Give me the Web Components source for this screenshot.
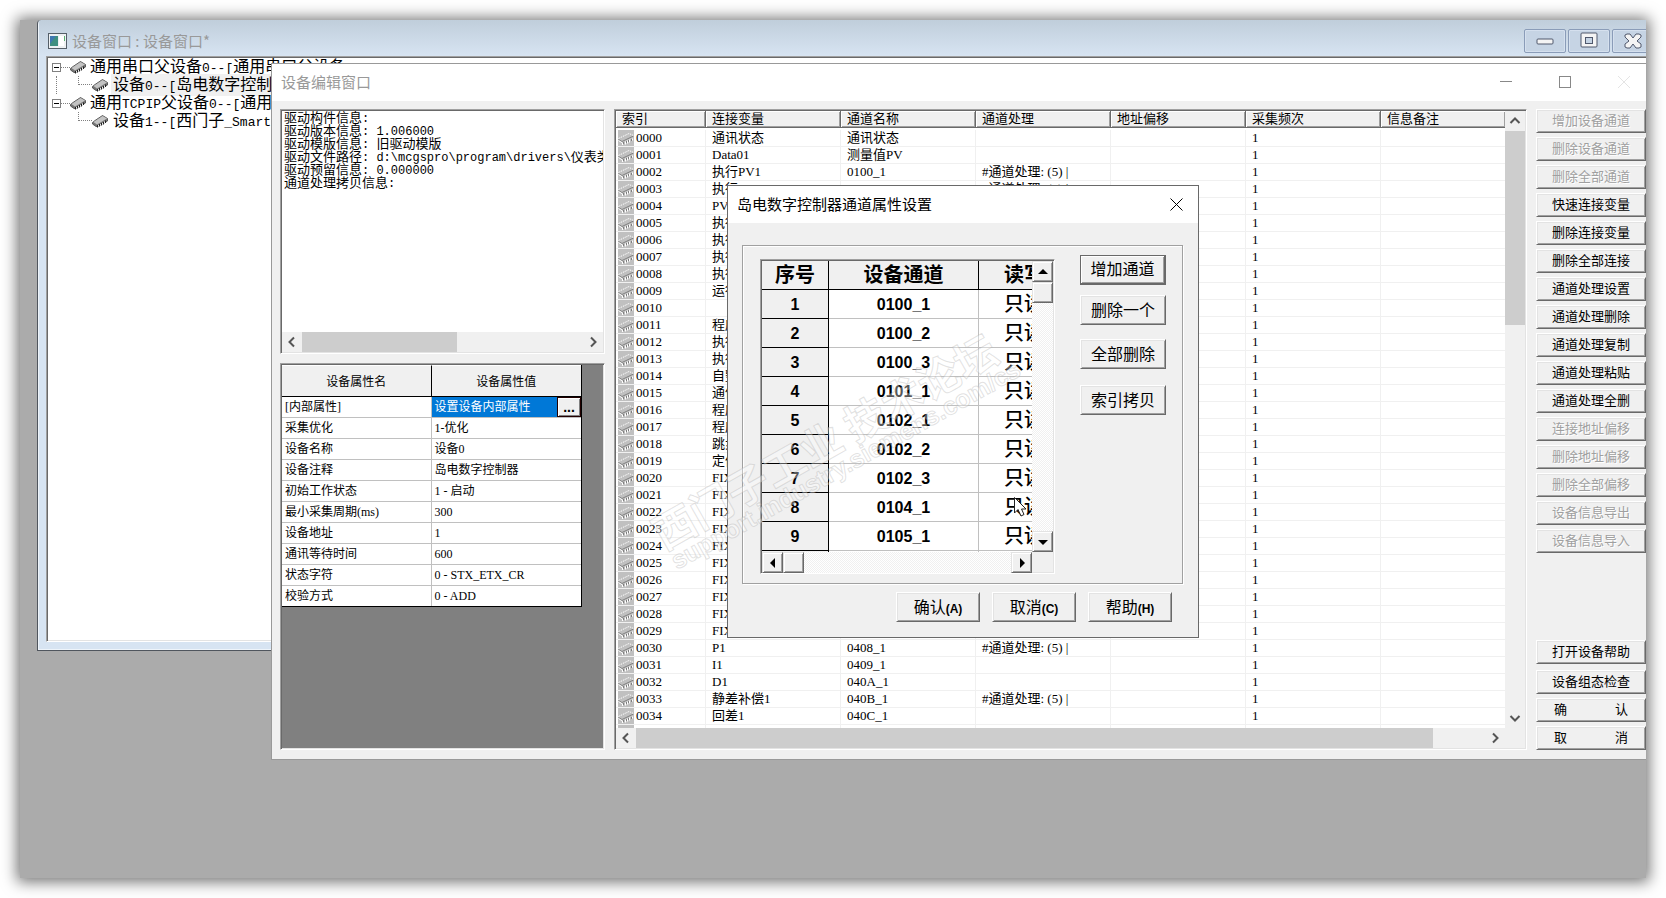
<!DOCTYPE html>
<html lang="zh-CN">
<head>
<meta charset="utf-8">
<title>设备窗口</title>
<style>
  html, body { margin: 0; height: 100%; background: #fff; }
  body { display: flex; font-family: "Liberation Serif", "Noto Sans CJK SC", serif; font-size: 13px; color: #000; overflow: hidden; }
</style>
</head>
<body>
<mdi-desktop>
  <device-window></device-window>
  <editor-window></editor-window>
  <channel-dialog></channel-dialog>
  <site-watermark></site-watermark>
</mdi-desktop>

<script>
const SANS = '"Noto Sans CJK SC", sans-serif';

const RESET = `
  :host, *, *::before, *::after { box-sizing: border-box; }
  button { font: inherit; color: inherit; margin: 0; padding: 0; border: 0; background: none; }
  table { border-collapse: separate; border-spacing: 0; table-layout: fixed; width: 100%; }
  th, td { font-weight: normal; text-align: left; padding: 0; white-space: nowrap; }
  .sunken { border: 1px solid; border-color: #a0a0a0 #fff #fff #a0a0a0; padding: 1px; background: #fff;
            box-shadow: inset 1px 1px #696969, inset -1px -1px #e3e3e3; }
`;

function define(name, css, html, after) {
  const tpl = document.createElement('template');
  tpl.innerHTML = `<style>${RESET}${css}</style>${html}`;
  customElements.define(name, class extends HTMLElement {
    constructor() {
      super();
      this.attachShadow({ mode: 'open' }).append(tpl.content.cloneNode(true));
    }
    connectedCallback() { if (after) after(this, this.shadowRoot); }
  });
}

/* Latin runs use a fixed-pitch face beside full-width Chinese glyphs */
const mix = s => s.replace(/[\x20-\x7e]+/g, m => `<span class="m">${m}</span>`);

/* ---------- icons ---------- */
define('chip-icon', `
  :host { display: block; width: 16px; height: 16px; flex: none; }
  :host([muted]) { background: #c0c0c0; }
  svg { display: block; }
  .muted { display: none; }
  :host([muted]) .muted { display: block; }
  :host([muted]) .solid { display: none; }
`, `
  <svg class="solid" width="16" height="16" viewBox="0 0 16 16">
    <path d="M.5 9.500 3 7.500 10.500 2.500 15.500 5.500V8L6 13.500H4L.5 11Z" fill="#777" stroke="#444" stroke-width=".8"/>
    <path d="M1.500 9 10.500 3 15 5.500 5 11.500Z" fill="#c4c4c4"/>
    <path d="M5.500 12v2.500M7.500 11v2.500M9.500 10v2.500M11.500 9v2.500M13.500 7.500v2.500" stroke="#222"/>
    <path d="M6.500 12v1.500M8.500 11v1.500M10.500 10v1.500M12.500 8.500v1.500" stroke="#eee"/>
  </svg>
  <svg class="muted" width="16" height="16" viewBox="0 0 16 16">
    <path d="M.5 8.500 11 3.500 15.500 5.500" fill="none" stroke="#fff" stroke-dasharray="1.500 1"/>
    <path d="M.5 9.500 4 11.500 15.500 6" fill="none" stroke="#808080"/>
    <path d="M.5 10.500 4.500 13V15M7.500 11.500v3M9.500 10.500v3M11.500 9.500v3M14.500 8.500v2" fill="none" stroke="#fff"/>
    <path d="M5.500 12v2M8.500 11v2M10.500 10v2M13.500 9v2" fill="none" stroke="#808080"/>
  </svg>`);

/* ---------- flat scroll bar ---------- */
define('flat-scrollbar', `
  :host { display: flex; background: #f0f0f0; }
  :host([vertical]) { flex-direction: column; }
  button { flex: none; width: 20px; height: 20px; display: grid; place-items: center; }
  .track { flex: 1; display: flex; }
  :host([vertical]) .track { flex-direction: column; }
  .thumb { background: #cdcdcd; flex: 0 0 var(--thumb); }
  .next svg { transform: rotate(180deg); }
  :host([vertical]) svg { rotate: 90deg; }
`, `
  <button class="prev" aria-label="向前滚动"><svg width="12" height="12" viewBox="0 0 12 12"><path d="M8 1.500 3.500 6 8 10.500" fill="none" stroke="#555" stroke-width="2"/></svg></button>
  <div class="track"><div class="thumb"></div></div>
  <button class="next" aria-label="向后滚动"><svg width="12" height="12" viewBox="0 0 12 12"><path d="M8 1.500 3.500 6 8 10.500" fill="none" stroke="#555" stroke-width="2"/></svg></button>`);

/* ---------- raised scroll bar ---------- */
define('classic-scrollbar', `
  :host { display: flex; justify-content: space-between;
          background: repeating-conic-gradient(#fff 0 25%, #f0f0f0 0 50%) 0 0 / 2px 2px; }
  :host([vertical]) { flex-direction: column; }
  div { display: flex; flex-direction: inherit; }
  button, i { width: 21px; height: 21px; background: #f0f0f0; border: 1px solid; border-color: #e3e3e3 #696969 #696969 #e3e3e3;
           box-shadow: inset 1px 1px #fff, inset -1px -1px #a0a0a0; display: grid; place-items: center; }
  .next svg { transform: rotate(180deg); }
  :host([vertical]) svg { rotate: 90deg; }
`, `
  <div><button aria-label="向前滚动"><svg width="10" height="10" viewBox="0 0 10 10"><path d="M7 0v10L2 5Z"/></svg></button><i></i></div>
  <button class="next" aria-label="向后滚动"><svg width="10" height="10" viewBox="0 0 10 10"><path d="M7 0v10L2 5Z"/></svg></button>`);

/* ---------- raised push button ---------- */
define('push-button', `
  :host { display: block; height: 24px; }
  button { width: 100%; height: 100%; padding-bottom: 3px; background: #f0f0f0; border: 1px solid; border-color: #fff #696969 #696969 #fff;
           box-shadow: inset 1px 1px #e3e3e3, inset -1px -1px #a0a0a0; white-space: nowrap; font-family: ${SANS}; }
  :host([disabled]) button { color: #a0a0a0; text-shadow: 1px 1px #fff; }
  :host([wide]) button { padding: 0 17px 3px; text-align-last: justify; }
  :host([default]) button { border-color: #696969; border-width: 1px 2px 2px 1px; box-shadow: inset 1px 1px #fff, inset -1px -1px #a0a0a0; }
  ::slotted(b) { font: bold 12px "Liberation Sans", sans-serif; }
`, `<button type="button"><slot></slot></button>`, (el, root) => {
  root.querySelector('button').disabled = el.hasAttribute('disabled');
});

/* ---------- desktop ---------- */
define('mdi-desktop', `
  :host { display: block; position: relative; flex: 1; margin: 20px; background: #ababab; overflow: hidden;
          box-shadow: 0 1px 14px 3px rgba(0,0,0,.55); }
  ::slotted(*) { position: absolute; }
`, `<slot></slot>`);

/* ---------- device window with tree ---------- */
define('device-window', `
  :host { left: 17px; right: -19px; top: 0; height: 631px; display: flex; flex-direction: column;
          border: 1px solid #50565e; border-top: 0; border-top-left-radius: 4px; padding: 0 8px 8px;
          background: linear-gradient(#c0cedb, #d7e4f2 36px); box-shadow: inset 1px -1px #eef4fa; }
  header { height: 36px; flex: none; display: flex; align-items: center; gap: 5px; padding: 5px 2px 0; font: 15px ${SANS}; color: #999; }
  h1 { font: inherit; margin: 0; flex: 1; white-space: pre; }
  .caps { display: flex; gap: 2px; }
  .caps button { width: 42px; height: 24px; border: 1px solid #8a9cb8; border-radius: 2px; box-shadow: inset 0 0 0 1px #d5e0ee;
                 background: #c6d4e4; display: grid; place-items: center; }
  .tree { flex: 1; list-style: none; margin: 0; font: 16px/18px ${SANS}; }
  .m { font: 13px/18px "Liberation Mono", monospace; white-space: pre; }
  ul { list-style: none; margin: 0; padding: 0; }
  .row { display: flex; height: 18px; align-items: center; padding-left: 4px; white-space: nowrap; }
  .box { width: 9px; height: 9px; border: 1px solid #808080; display: grid; place-items: center; }
  .box::before { content: ""; width: 5px; height: 1px; background: #000; }
  .dots { width: 9px; border-top: 1px dotted #808080; }
  .rail { width: 22px; height: 18px; margin-left: 4px; }
  .rail.on { border-left: 1px dotted #808080; }
  .elbow { width: 14px; height: 9px; align-self: start; border: dotted #808080; border-width: 0 0 1px 1px; }
  .label { padding-left: 4px; }
  .child .label { padding-left: 2px; margin-left: 3px; }
  .sel { background: #f0f0f0; }
`, `
  <header>
    <svg width="19" height="16" viewBox="0 0 19 16"><rect x=".5" y=".5" width="18" height="15" fill="#eef1f3" stroke="#555f68"/><rect x="2" y="3" width="8" height="10" fill="#3f8f80"/><path d="M2 3h6l-6 8Z" fill="#3f78b0"/><rect x="11" y="3" width="5" height="10" fill="#fff"/><rect x="16" y="3" width="1" height="5" fill="#58b070"/></svg>
    <h1>设备窗口 : 设备窗口*</h1>
    <div class="caps">
      <button aria-label="最小化"><svg width="18" height="8"><rect x="1" y="2" width="16" height="5" rx="1" fill="#f4f4f4" stroke="#50586c"/></svg></button>
      <button aria-label="最大化"><svg width="18" height="17"><rect x="1" y="1" width="16" height="14" rx="1" fill="#f4f4f4" stroke="#50586c"/><rect x="5.500" y="5.500" width="7" height="6" fill="#c6d4e4" stroke="#50586c"/></svg></button>
      <button aria-label="关闭"><svg width="18" height="16"><path d="M1 2 3 1h3l3 4 3-4h3l2 1v2l-4 4 4 3v3l-2 1h-3l-3-4-3 4H3l-2-1v-3l4-3-4-4Z" fill="#f4f4f4" stroke="#50586c"/></svg></button>
    </div>
  </header>
  <div class="tree sunken"><ul></ul></div>
`, (el, root) => {
  const root1 = t => `<li class="row"><span class="box"></span><span class="dots"></span><chip-icon></chip-icon><span class="label">${mix(t)}</span></li>`;
  const child = (t, rail, sel) => `<li class="row child"><span class="rail ${rail}"></span><span class="elbow"></span><chip-icon></chip-icon><span class="label ${sel}">${mix(t)}</span></li>`;
  root.querySelector('ul').innerHTML =
    root1('通用串口父设备0--[通用串口父设备]') + child('设备0--[岛电数字控制器]', 'on', 'sel') +
    root1('通用TCPIP父设备0--[通用TCPIP父设备]') + child('设备1--[西门子_Smart200]', '', '');
});

/* ---------- driver information ---------- */
define('driver-info', `
  :host { display: block; height: 245px; min-width: 0; }
  .sunken { height: 100%; display: flex; flex-direction: column; }
  .text { flex: 1; padding-left: 2px; overflow: hidden; white-space: pre; font: 13px/13px ${SANS}; }
  p { margin: 0; height: 13px; line-height: 12px; }
  .m { font: 12px/12px "Liberation Mono", monospace; }
  flat-scrollbar { height: 20px; --thumb: 155px; }
`, `<div class="sunken"><div class="text"></div><flat-scrollbar></flat-scrollbar></div>`, (el, root) => {
  root.querySelector('.text').innerHTML = ['驱动构件信息:', '驱动版本信息: 1.006000', '驱动模版信息: 旧驱动模版',
    '驱动文件路径: d:\\mcgspro\\program\\drivers\\仪表类', '驱动预留信息: 0.000000', '通道处理拷贝信息:'].map(t => `<p>${mix(t)}</p>`).join('');
});

/* ---------- property table ---------- */
define('property-grid', `
  :host { display: block; min-width: 0; }
  .sunken { height: 100%; background: #808080; font-size: 12px; }
  table { width: 300px; border: solid #000; border-width: 0 1px 1px 0; background: #fff; }
  th { height: 32px; background: #f0f0f0; text-align: center; border-bottom: 1px solid #000; border-top: 1px solid #fff; }
  th:first-child { border-right: 1px solid #000; }
  td { height: 21px; border-bottom: 1px solid #c0c0c0; padding-left: 3px; line-height: 20px; }
  td:first-child { border-right: 1px solid #c0c0c0; }
  tr:last-child td { border-bottom: 0; height: 20px; }
  .sel { background: #0078d7; color: #fff; }
  .sel div { display: flex; justify-content: space-between; height: 20px; }
  .sel button { width: 24px; height: 20px; color: #000; background: #f0f0f0; border: 1px solid #200; font: bold 14px/16px "Liberation Sans", sans-serif;
                box-shadow: inset 1px 1px #fff, inset -1px -1px #808080; }
`, `<div class="sunken"><table><thead><tr><th>设备属性名</th><th>设备属性值</th></tr></thead><tbody></tbody></table></div>`, (el, root) => {
  const rows = [['采集优化', '1-优化'], ['设备名称', '设备0'], ['设备注释', '岛电数字控制器'], ['初始工作状态', '1 - 启动'],
    ['最小采集周期(ms)', '300'], ['设备地址', '1'], ['通讯等待时间', '600'], ['状态字符', '0 - STX_ETX_CR'], ['校验方式', '0 - ADD']];
  root.querySelector('tbody').innerHTML =
    '<tr><td>[内部属性]</td><td class="sel"><div>设置设备内部属性<button>...</button></div></td></tr>' +
    rows.map(r => `<tr><td>${r[0]}</td><td>${r[1]}</td></tr>`).join('');
});

/* ---------- channel list ---------- */
define('channel-list', `
  :host { display: block; min-width: 0; min-height: 0; }
  .sunken { height: 100%; display: grid; grid-template: minmax(0, 1fr) 20px / minmax(0, 1fr) 20px; }
  .view { overflow: hidden; }
  col { width: 135px; }
  col:first-child { width: 90px; }
  col:last-child { width: auto; }
  th { height: 17px; line-height: 16px; background: #f0f0f0; padding-left: 6px;
       border: solid #696969; border-width: 0 1px 1px 0; box-shadow: inset 1px 1px #fff, inset -1px -1px #a0a0a0; }
  th:last-child { border-right: 0; }
  thead::after { content: ""; display: block; height: 2px; }
  td { height: 17px; line-height: 16px; padding-left: 6px; border: solid #f0f0f0; border-width: 0 1px 1px 0; }
  td:last-child { border-right: 0; }
  td:first-child { padding-left: 2px; }
  td div { display: flex; align-items: center; gap: 2px; height: 16px; }
  .side { --thumb: 194px; }
  .foot { margin-right: 20px; --thumb: calc(100% - 52px); }
  .footer { grid-column: 1 / -1; background: #f0f0f0; display: grid; }
`, `
  <div class="sunken">
    <div class="view"><table><colgroup><col><col><col><col><col><col><col></colgroup>
      <thead><tr><th>索引</th><th>连接变量</th><th>通道名称</th><th>通道处理</th><th>地址偏移</th><th>采集频次</th><th>信息备注</th></tr></thead>
      <tbody></tbody></table></div>
    <flat-scrollbar vertical class="side"></flat-scrollbar>
    <div class="footer"><flat-scrollbar class="foot"></flat-scrollbar></div>
  </div>`, (el, root) => {
  const names = ['通讯状态', 'Data01', '执行PV1', '执行PV2', 'PV1', '执行', '执行', '执行', '执行', '运行', '', '程序', '执行', '执行', '自整定',
    '通信', '程序', '程序', '跳步', '定值', 'FIX', 'FIX', 'FIX', 'FIX', 'FIX', 'FIX', 'FIX', 'FIX', 'FIX', 'FIX', 'P1', 'I1', 'D1', '静差补偿1', '回差1', ''];
  const chan = { 0: '通讯状态', 1: '测量值PV', 2: '0100_1', 3: '0100_2', 30: '0408_1', 31: '0409_1', 32: '040A_1', 33: '040B_1', 34: '040C_1' };
  const proc = { 2: 1, 3: 1, 30: 1, 33: 1 };
  root.querySelector('tbody').innerHTML = names.map((n, i) => `<tr><td><div><chip-icon muted></chip-icon>${i < 35 ? String(i).padStart(4, '0') : ''}</div></td>
    <td>${n}</td><td>${chan[i] || ''}</td><td>${proc[i] ? '#通道处理: (5) |' : ''}</td><td></td><td>${i < 35 ? 1 : ''}</td><td></td></tr>`).join('');
});

/* ---------- editor window ---------- */
define('editor-window', `
  :host { left: 251px; right: 0; top: 43px; height: 697px; display: flex; flex-direction: column; background: #f0f0f0;
          border: solid #999; border-width: 1px 0 1px 1px; }
  header { height: 37px; flex: none; background: #fff; display: flex; align-items: center; padding: 0 0 2px 9px; font: 15px ${SANS}; color: #999; }
  h2 { font: inherit; margin: 0; flex: 1; }
  header button { width: 59px; height: 36px; display: grid; place-items: center; }
  header button:last-child { margin-right: -7px; }
  main { flex: 1; min-height: 0; display: grid; grid-template-columns: 325px minmax(0, 1fr) 110px; column-gap: 9px; padding: 8px 0 9px 8px; }
  .left { display: grid; grid-template: auto 1fr / minmax(0, 1fr); gap: 9px; min-height: 0; }
  nav { display: flex; flex-direction: column; gap: 4px; }
  .gap { flex: 1; }
  .first { margin-bottom: 2px; }
`, `
  <header><h2>设备编辑窗口</h2>
    <button aria-label="最小化"><svg width="12" height="12"><path d="M0 5.500h12" stroke="#888"/></svg></button>
    <button aria-label="最大化"><svg width="12" height="12"><rect x=".5" y=".5" width="11" height="11" fill="none" stroke="#888"/></svg></button>
    <button aria-label="关闭" disabled><svg width="12" height="12"><path d="M0 0 12 12M12 0 0 12" stroke="#e4e4e4"/></svg></button>
  </header>
  <main>
    <div class="left"><driver-info></driver-info><property-grid></property-grid></div>
    <channel-list></channel-list>
    <nav>
      <push-button disabled>增加设备通道</push-button>
      <push-button disabled>删除设备通道</push-button>
      <push-button disabled>删除全部通道</push-button>
      <push-button>快速连接变量</push-button>
      <push-button>删除连接变量</push-button>
      <push-button>删除全部连接</push-button>
      <push-button>通道处理设置</push-button>
      <push-button>通道处理删除</push-button>
      <push-button>通道处理复制</push-button>
      <push-button>通道处理粘贴</push-button>
      <push-button>通道处理全删</push-button>
      <push-button disabled>连接地址偏移</push-button>
      <push-button disabled>删除地址偏移</push-button>
      <push-button disabled>删除全部偏移</push-button>
      <push-button disabled>设备信息导出</push-button>
      <push-button disabled>设备信息导入</push-button>
      <div class="gap"></div>
      <push-button class="first">打开设备帮助</push-button>
      <push-button>设备组态检查</push-button>
      <push-button wide>确 认</push-button>
      <push-button wide>取 消</push-button>
    </nav>
  </main>`);

/* ---------- channel attribute dialog ---------- */
define('channel-dialog', `
  :host { left: 707px; top: 165px; width: 472px; height: 453px; display: flex; flex-direction: column; background: #f0f0f0; border: 1px solid #696969; }
  header { height: 37px; flex: none; background: #fff; display: flex; align-items: center; padding: 0 15px 0 9px; font: 15px ${SANS}; }
  h2 { font: inherit; margin: 0; flex: 1; padding-bottom: 2px; }
  fieldset { min-width: 0; margin: 22px 15px 0 14px; padding: 13px 16px 9px 17px; border: 1px solid #a0a0a0; box-shadow: 1px 1px #fff, inset 1px 1px #fff;
             display: flex; justify-content: space-between; align-items: start; flex: none; }
  .sunken { width: 295px; height: 315px; display: grid; grid-template: 291px 21px / minmax(0, 1fr) 21px; background: #f0f0f0; }
  .view { overflow: hidden; background: #fff; }
  table { width: 367px; }
  col { width: 150px; }
  col:first-child { width: 67px; }
  th { font: bold 20px/24px ${SANS}; text-align: center; height: 29px; padding-bottom: 3px; background: #f0f0f0; border: solid #000; border-width: 0 1px 1px 0; }
  td, tbody th { font: bold 16px/27px "Liberation Sans", sans-serif; text-align: center; height: 29px; padding-bottom: 0; border: solid #c0c0c0; border-width: 0 1px 1px 0; }
  tbody th { border-color: #000; }
  tr > :last-child { font: 500 20px/24px ${SANS}; text-align: left; padding: 0 0 3px 25px; }
  thead tr > :last-child { font-weight: bold; }
  .acts { display: grid; grid-template-rows: 40px 44px 46px 30px; width: 86px; margin-top: -4px; font-size: 16px; }
  .acts push-button, footer push-button { height: 30px; }
  footer { display: flex; justify-content: flex-end; gap: 12px; padding: 8px 26px 0 0; font-size: 16px; }
  footer push-button { width: 84px; }
`, `
  <header><h2>岛电数字控制器通道属性设置</h2>
    <button aria-label="关闭"><svg width="13" height="13"><path d="M.5.5 12.500 12.500M12.500.5.5 12.500" stroke="#000"/></svg></button></header>
  <fieldset>
    <div class="sunken">
      <div class="view"><table><colgroup><col><col><col></colgroup>
        <thead><tr><th>序号</th><th>设备通道</th><th>读写</th></tr></thead><tbody></tbody></table></div>
      <classic-scrollbar vertical></classic-scrollbar>
      <classic-scrollbar></classic-scrollbar>
    </div>
    <div class="acts">
      <push-button default>增加通道</push-button>
      <push-button>删除一个</push-button>
      <push-button>全部删除</push-button>
      <push-button>索引拷贝</push-button>
    </div>
  </fieldset>
  <footer><push-button>确认<b>(A)</b></push-button><push-button>取消<b>(C)</b></push-button><push-button>帮助<b>(H)</b></push-button></footer>
`, (el, root) => {
  root.querySelector('tbody').innerHTML = ['0100_1', '0100_2', '0100_3', '0101_1', '0102_1', '0102_2', '0102_3', '0104_1', '0105_1']
    .map((c, i) => `<tr><th>${i + 1}</th><td>${c}</td><td>只读</td></tr>`).join('') + '<tr><th></th><td></td><td></td></tr>';
});

/* ---------- watermark and mouse pointer over the windows ---------- */
define('site-watermark', `
  :host { inset: 0; pointer-events: none; }
  svg { display: block; overflow: visible; }
  text { fill: #fff; fill-opacity: .35; stroke: #aaa; stroke-opacity: .35; stroke-width: 1px; font-weight: bold; }
`, `
  <svg width="1040" height="600">
    <g transform="translate(644 531) rotate(-29.500)"><text font-family="Noto Sans CJK SC" font-size="42">西门子工业 技术论坛</text></g>
    <g transform="translate(657 550) rotate(-29.500)"><text font-family="Liberation Sans" font-size="25">support.industry.siemens.com/cs</text></g>
    <path transform="translate(994 477)" d="M.5.500V16l3.500-3.500L7 19l3-1.500L7.500 12H12Z" fill="#fff" stroke="#222"/>
  </svg>`);
</script>
</body>
</html>
